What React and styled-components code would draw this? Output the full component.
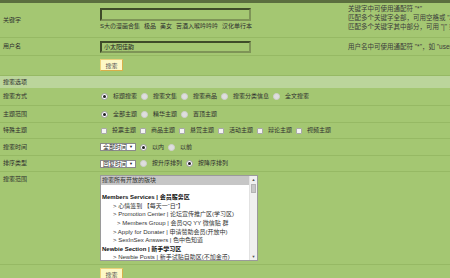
import React from "react";
import styled, { createGlobalStyle } from "styled-components";

const GlobalStyle = createGlobalStyle`
  html, body {
    margin: 0;
    padding: 0;
    background: #a4c772;
    overflow: hidden;
  }
  body {
    font-family: "Liberation Sans", "Noto Sans CJK SC", sans-serif;
    font-size: 6px;
    color: #2e2e2e;
  }
`;

const Page = styled.div`
  width: 450px;
  height: 278px;
  overflow: hidden;
`;

const TopStrip = styled.div`
  height: 3px;
  background: #5b6e3f;
`;

const Row = styled.div`
  display: grid;
  grid-template-columns: 100px 248px 1fr;
  height: ${p => p.$h}px;
  border-bottom: 1px solid #96b964;
  white-space: nowrap;
`;

const Label = styled.div`
  padding-left: 3px;
  align-self: ${p => (p.$top ? "start" : "center")};
  padding-top: ${p => (p.$top ? 3 : 0)}px;
  line-height: 9px;
`;

const Cell = styled.div`
  display: flex;
  flex-direction: ${p => (p.$column ? "column" : "row")};
  align-items: ${p => (p.$column ? "flex-start" : "center")};
  padding-top: ${p => p.$pt || 0}px;
`;

const Hint = styled.div`
  font-size: 6.5px;
  line-height: 9px;
  color: #3c3c3c;
  padding-top: ${p => p.$pt || 0}px;
  align-self: ${p => (p.$center ? "center" : "start")};
`;

const TextInput = styled.div`
  width: 151px;
  height: ${p => p.$h}px;
  box-sizing: border-box;
  border: 2px solid #3f4b29;
  border-right-color: #7e9457;
  border-bottom-color: #7e9457;
  padding-left: 2px;
  line-height: ${p => p.$h - 4}px;
  color: #222;
`;

const Tags = styled.div`
  display: flex;
  gap: 4px;
  line-height: 9px;
  margin-top: 1px;
`;

const Button = styled.div`
  width: 23px;
  height: 12px;
  box-sizing: border-box;
  background: #fdf8c6;
  border: 1px solid #ecd27a;
  border-right-color: #d9b04a;
  border-bottom-color: #d9b04a;
  color: #555;
  display: flex;
  align-items: center;
  justify-content: center;
`;

const ButtonRow = styled(Row)`
  ${Cell} {
    align-items: flex-start;
    padding-top: ${p => p.$pt}px;
  }
`;

const Header = styled.div`
  height: 12px;
  background: #bbd59b;
  padding-left: 3px;
  line-height: 12px;
`;

const Choice = styled.label`
  display: flex;
  align-items: center;
  margin-left: ${p => (p.$first ? 1 : 4)}px;
  gap: 5px;
  line-height: 9px;
`;

const Radio = styled.span`
  width: 7px;
  height: 7px;
  box-sizing: border-box;
  border-radius: 50%;
  border: 1px solid ${p => (p.$on ? "#9a9a9a" : "#cfcfcf")};
  background: ${p => (p.$on ? "#fff" : "#dedede")};
  display: flex;
  align-items: center;
  justify-content: center;
  &::after {
    content: "";
    width: 3px;
    height: 3px;
    border-radius: 50%;
    background: ${p => (p.$on ? "#1f1f1f" : "transparent")};
  }
`;

const Check = styled.span`
  width: 6px;
  height: 6px;
  box-sizing: border-box;
  border: 1px solid #a9a9a9;
  border-radius: 1px;
  background: #f3f3f3;
`;

const Select = styled.div`
  width: 36px;
  height: 8px;
  box-sizing: border-box;
  background: #fff;
  border: 1px solid #8a8a8a;
  display: flex;
  align-items: center;
  justify-content: space-between;
  padding: 0 2px;
  line-height: 6px;
  margin-right: 3px;
  color: #222;
  span {
    font-size: 4px;
  }
`;

const ListBox = styled.div`
  width: 158px;
  height: 86px;
  box-sizing: border-box;
  border: 1px solid #9a9a9a;
  background: #fff;
  display: flex;
  margin-top: 3px;
`;

const ListItems = styled.div`
  flex: 1;
  overflow: hidden;
`;

const Option = styled.div`
  height: 8.6px;
  line-height: 8.6px;
  padding-left: ${p => 1 + (p.$indent || 0)}px;
  font-weight: ${p => (p.$bold ? "bold" : "normal")};
  background: ${p => (p.$selected ? "#c6c6c6" : "transparent")};
  color: ${p => (p.$bold ? "#111" : "#333")};
`;

const ScrollBar = styled.div`
  width: 7px;
  background: #f0f0f0;
  border-left: 1px solid #e2e2e2;
  display: flex;
  flex-direction: column;
  align-items: center;
  font-size: 4px;
  color: #555;
  line-height: 7px;
`;

const Thumb = styled.div`
  width: 5px;
  height: 9px;
  background: #c8c8c8;
  border: 1px solid #b4b4b4;
  box-sizing: border-box;
  margin-top: 1px;
`;

const Spacer = styled.div`
  flex: 1;
`;

const Footer = styled.div`
  margin: 1px 0 0 192px;
  height: 3px;
  background: #4d5d39;
`;

function Choices({ kind, items }) {
  return items.map((it, i) => (
    <Choice key={it.text} $first={i === 0}>
      {kind === "check" ? <Check /> : <Radio $on={it.on} />}
      {it.text}
    </Choice>
  ));
}

const forumOptions = [
  { text: "搜索所有开放的版块", selected: true },
  { text: "\u00a0" },
  { text: "Members Services | 会员服务区", bold: true },
  { text: "> 心情签到 【每天一\u201c日\u201d】", indent: 11 },
  { text: "> Promotion Center | 论坛宣传推广区(学习区)", indent: 11 },
  { text: "> Members Group | 会员QQ YY 微信贴 群", indent: 15 },
  { text: "> Apply for Donater | 申请赞助会员(开放中)", indent: 11 },
  { text: "> SexInSex Answers | 色中色知道", indent: 11 },
  { text: "Newbie Section | 新手学习区", bold: true },
  { text: "> Newbie Posts | 新手试贴自助区(不加金币)", indent: 11 },
];

export default function App() {
  return (
    <Page>
      <GlobalStyle />
      <TopStrip />

      <Row $h={34}>
        <Label>关键字</Label>
        <Cell $column $pt={5}>
          <TextInput $h={13} />
          <Tags>
            <span>S大の漫画合集</span>
            <span>极品</span>
            <span>美女</span>
            <span>苦酒入喉吟吟吟</span>
            <span>汉化单行本</span>
          </Tags>
        </Cell>
        <Hint $pt={1}>
          <div>关键字中可使用通配符 "*"</div>
          <div>匹配多个关键字全部，可用空格或 "AND" 连接。如 win32 AND unix</div>
          <div>匹配多个关键字其中部分，可用 "|" 或 "OR" 连接。如 win32 OR unix</div>
        </Hint>
      </Row>

      <Row $h={17}>
        <Label>用户名</Label>
        <Cell>
          <TextInput $h={12}>小太阳佳韵</TextInput>
        </Cell>
        <Hint $center>用户名中可使用通配符 "*"，如 "user*"</Hint>
      </Row>

      <ButtonRow $h={19} $pt={3}>
        <div />
        <Cell>
          <Button>搜索</Button>
        </Cell>
      </ButtonRow>

      <Header>搜索选项</Header>

      <Row $h={17}>
        <Label>搜索方式</Label>
        <Cell>
          <Choices
            items={[
              { text: "标题搜索", on: true },
              { text: "搜索文集" },
              { text: "搜索商品" },
              { text: "搜索分类信息" },
              { text: "全文搜索" },
            ]}
          />
        </Cell>
      </Row>

      <Row $h={16}>
        <Label>主题范围</Label>
        <Cell>
          <Choices
            items={[
              { text: "全部主题", on: true },
              { text: "精华主题" },
              { text: "置顶主题" },
            ]}
          />
        </Cell>
      </Row>

      <Row $h={15}>
        <Label>特殊主题</Label>
        <Cell>
          <Choices
            kind="check"
            items={[
              { text: "投票主题" },
              { text: "商品主题" },
              { text: "悬赏主题" },
              { text: "活动主题" },
              { text: "辩论主题" },
              { text: "视频主题" },
            ]}
          />
        </Cell>
      </Row>

      <Row $h={16}>
        <Label>搜索时间</Label>
        <Cell>
          <Select>
            全部时间<span>▼</span>
          </Select>
          <Choices items={[{ text: "以内", on: true }, { text: "以前" }]} />
        </Cell>
      </Row>

      <Row $h={15}>
        <Label>排序类型</Label>
        <Cell>
          <Select>
            回复时间<span>▼</span>
          </Select>
          <Choices items={[{ text: "按升序排列" }, { text: "按降序排列", on: true }]} />
        </Cell>
      </Row>

      <Row $h={92}>
        <Label $top>搜索范围</Label>
        <Cell $column>
          <ListBox>
            <ListItems>
              {forumOptions.map((o, i) => (
                <Option key={i} $bold={o.bold} $indent={o.indent} $selected={o.selected}>
                  {o.text}
                </Option>
              ))}
            </ListItems>
            <ScrollBar>
              <div>▲</div>
              <Thumb />
              <Spacer />
              <div>▼</div>
            </ScrollBar>
          </ListBox>
        </Cell>
      </Row>

      <ButtonRow $h={19} $pt={3}>
        <div />
        <Cell>
          <Button>搜索</Button>
        </Cell>
      </ButtonRow>

      <Footer />
    </Page>
  );
}
